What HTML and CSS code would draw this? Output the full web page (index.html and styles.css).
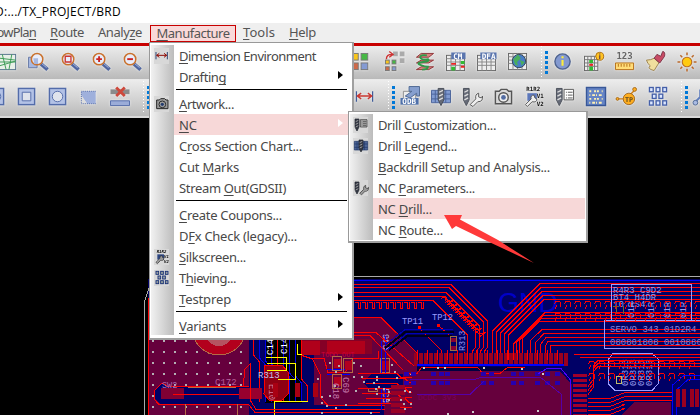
FILE: index.html
```
<!DOCTYPE html>
<html lang="en">
<head>
<meta charset="utf-8">
<title>PCB Editor</title>
<link rel="stylesheet" href="styles.css">
</head>
<body>
<div class="app">
  <header class="titlebar"><span data-w="126">D:.../TX_PROJECT/BRD</span></header>
  <nav class="menubar">
    <span class="first" data-w="48">FlowPla<u>n</u></span>
    <span data-w="34"><u>R</u>oute</span>
    <span data-w="44">Analy<u>z</u>e</span>
    <span class="open"><span data-w="73"><u>M</u>anufacture</span></span>
    <span class="tools" data-w="32"><u>T</u>ools</span>
    <span data-w="27"><u>H</u>elp</span>
  </nav>
  <div class="toolbar row1" id="row1"></div>
  <div class="toolbar row2" id="row2"></div>
  <main class="workspace">
    <svg class="board" id="board" width="700" height="297" viewBox="0 118 700 297" shape-rendering="crispEdges"></svg>
  </main>
</div>

<div class="menu main-menu">
  <div class="item"><i data-icon="dim"></i><span data-w="137"><u>D</u>imension Environment</span></div>
  <div class="item"><i></i><span data-w="47">Draftin<u>g</u></span><b></b></div>
  <hr>
  <div class="item"><i data-icon="camera"></i><span data-w="55"><u>A</u>rtwork...</span></div>
  <div class="item active"><i></i><span data-w="18"><u>N</u>C</span><b></b></div>
  <div class="item"><i></i><span data-w="123">C<u>r</u>oss Section Chart...</span></div>
  <div class="item"><i></i><span data-w="60">Cut <u>M</u>arks</span></div>
  <div class="item"><i></i><span data-w="107">Stream <u>O</u>ut(GDSII)</span></div>
  <hr>
  <div class="item"><i></i><span data-w="103"><u>C</u>reate Coupons...</span></div>
  <div class="item"><i></i><span data-w="118">D<u>F</u>x Check (legacy)...</span></div>
  <div class="item"><i data-icon="silk"></i><span data-w="67"><u>S</u>ilkscreen...</span></div>
  <div class="item"><i data-icon="thief"></i><span data-w="57">T<u>h</u>ieving...</span></div>
  <div class="item"><i></i><span data-w="52"><u>T</u>estprep</span><b></b></div>
  <hr>
  <div class="item"><i></i><span data-w="47"><u>V</u>ariants</span><b></b></div>
</div>

<div class="menu sub-menu">
  <div class="item"><i data-icon="drillList"></i><span data-w="118">Drill <u>C</u>ustomization...</span></div>
  <div class="item"><i data-icon="drillGrid"></i><span data-w="79">Drill <u>L</u>egend...</span></div>
  <div class="item"><i></i><span data-w="172"><u>B</u>ackdrill Setup and Analysis...</span></div>
  <div class="item"><i data-icon="drillWrench"></i><span data-w="97">NC <u>P</u>arameters...</span></div>
  <div class="item active"><i></i><span data-w="54">NC <u>D</u>rill...</span></div>
  <div class="item"><i></i><span data-w="65">NC <u>R</u>oute...</span></div>
</div>
<svg class="pointer" width="92" height="50" viewBox="0 0 92 50"><path d="M0 0L18 0L16 4.5L54 25L90 48L43 26L12 11L8 14Z" fill="#ff3a3a"/></svg>
<script src="app.js"></script>
</body>
</html>
```

FILE: styles.css
```
* { box-sizing: border-box; }
body { margin: 0; width: 700px; height: 415px; overflow: hidden; background: #000; color: #484848; font-family: "Noto Sans", "Open Sans", sans-serif; font-size: 13px; }
u { text-decoration: underline; text-decoration-thickness: 1px; text-underline-offset: 2px; text-decoration-skip-ink: none; }
.app { display: flex; flex-direction: column; width: 700px; height: 415px; overflow: hidden; }
[data-w] { white-space: nowrap; flex: none; }
.titlebar { flex: none; display: flex; align-items: center; height: 23px; background: #fff; color: #000; font-family: "Open Sans", sans-serif; font-size: 12px; }
.titlebar span { margin-left: -5px; }
.menubar { flex: none; display: flex; align-items: center; gap: 14px; height: 23px; padding-bottom: 3px; background: #efefef; border-bottom: 3px solid #c80000; color: #555; }
.first { margin-left: -12px; }
.open { display: flex; align-items: center; justify-content: center; width: 86px; height: 17px; margin-left: -6px; margin-top: 3px; border: 1px solid #c80000; background: #f9d9d9; }
.tools { margin-left: -7px; }
.toolbar { flex: none; display: flex; align-items: center; overflow: hidden; background: linear-gradient(#ececec, #d2d2d2 55%, #b9b9b9); border-bottom: 1px solid #e9e9e9; }
.row1 { height: 34px; padding-bottom: 1px; }
.row2 { height: 38px; padding-bottom: 2px; border-bottom: 2px solid #d9d9d9; }
.row1 .cell:first-child { margin-left: -7.5px; }
.row2 .cell:first-child { margin-left: -19.5px; }
.cell { flex: none; width: 31px; height: 24px; display: flex; align-items: center; justify-content: center; }
.cell svg { overflow: visible; filter: drop-shadow(0 0 1px #f2f2f2); }
.gap { flex: none; width: 200px; }
.handle { flex: none; display: flex; gap: 3px; width: 14px; height: 34px; padding-left: 7px; align-items: center; }
.handle::before { content: ""; width: 1px; height: 33px; background: repeating-linear-gradient(#fff 0 1px, transparent 1px 3px); }
.handle::after { content: ""; width: 3px; height: 23px; background: repeating-linear-gradient(#0078d7 0 3px, transparent 3px 5px); }
.workspace { flex: none; height: 297px; background: #000; }
.board { display: block; }
.board text { font-family: "Liberation Mono", monospace; }
.menu { position: absolute; background: #fff; border: 1px solid #999; border-right: 2px solid #a0a0a0; border-bottom: 2px solid #a0a0a0; }
.main-menu { left: 149px; top: 42px; width: 205px; height: 298px; padding: 2px 2px 2px 1px; background: linear-gradient(90deg, #f1f1f1, #bcbcbc) 1px 2px / 23px 290px no-repeat #fff; }
.sub-menu { left: 348px; top: 111px; width: 240px; height: 132px; padding: 2px 1px 1px 1px; background: linear-gradient(90deg, #f1f1f1, #bcbcbc) 1px 2px / 23px 126px no-repeat #fff; }
.item { display: flex; align-items: center; height: 21px; }
.item i { flex: none; display: flex; justify-content: center; align-items: center; width: 15px; height: 16px; margin: 0 5px 0 3px; }
.item i[data-icon] { background: #d8d8d8; }
.item i svg { width: 14px; height: 14px; overflow: visible; filter: contrast(1.5) brightness(.6); }
.item span { padding-left: 5px; }
.item b { margin: -3px 7px 0 auto; border: 4px solid transparent; border-left: 5px solid #000; border-right: 0; }
.active { background: linear-gradient(#f7d8d8, #f7d8d8) 23px 0 no-repeat; }
.active b { border-left-color: #fff; }
.menu hr { height: 1px; margin: 2px 3px 3px 25px; border: 0; background: #000; }
.pointer { position: absolute; left: 444px; top: 215px; }
```

FILE: app.js
```
const drill = x => `<path d="M${x} 1h6v12l-3 6l-3-6z" fill="#666b78" stroke="#484d57"/><path d="M${x+1} 5l4-2M${x+1} 9l4-2M${x+1} 13l4-2" stroke="#ddd" stroke-width="1.4"/>`;
const wrench = '<path d="M8 18l6-6q-1-5 3-6l0 4 3 1 1-2q1 6-5 6l-5 5z" fill="#eee" stroke="#555"/>';
const lens = inner => `<path d="M12 12l7 6" stroke="#4e65a0" stroke-width="4"/><path d="M12 11l6 5" stroke="#aab9e0"/><circle cx="8" cy="7" r="6" fill="#e8edfa" stroke="#c9722e" stroke-width="1.6"/>${inner}`;
const gridLines = (x, y, w, h, c) => `<rect x="${x}" y="${y}" width="${w}" height="${h}" fill="#eee" stroke="#666"/><path d="M${x} ${y+3.5}h${w}M${x} ${y+7}h${w}M${x} ${y+10.5}h${w}M${x+w/4} ${y}v${h}M${x+w/2} ${y}v${h}M${x+w*.75} ${y}v${h}" stroke="${c}"/>`;
const square = (x, y, c, s = 7) => `<rect x="${x}" y="${y}" width="${s}" height="${s}" fill="${c}" stroke="#777"/>`;
const box = '<rect x="1" y="1" width="17" height="17" fill="#b3c2e6" stroke="#536caa" stroke-width="1.5"/>';
const label = (x, y, s, t, c = '#fff') => `<text x="${x}" y="${y}" font-family="DejaVu Sans Mono" font-weight="bold" font-size="${s}" fill="${c}">${t}</text>`;
const icons = {
  map: '<rect x="1" y="2" width="17" height="16" fill="#e8f0e8" stroke="#56738d"/><path d="M1 6l17 2M1 14l17-5M4 2l4 16M11 18l3-16M1 10h17" stroke="#3b9b54" fill="none"/>',
  zoomBox: '<path d="M-1 5h9v11H-1z" fill="#a7b8e1" stroke="#6679a6"/>' + lens('<path d="M4 6h5v6H5z" fill="#a7b8e1"/>'),
  zoomFit: lens('<path d="M5 4h6v6H5z" fill="none" stroke="#c33" stroke-width="1.4"/>'),
  zoomIn: lens('<path d="M5 7h6M8 4v6" stroke="#c22" stroke-width="2"/>'),
  zoomOut: lens('<path d="M5 7h6" stroke="#c22" stroke-width="2"/>'),
  colors: square(-2, 1, '#f9c51c') + square(8, 1, '#46b844') + square(-2, 11, '#cf6948') + square(8, 11, '#859bd3'),
  swap: '<path d="M9 -1h5v5H9zM16 -1h5v5h-5zM16 6h5v5h-5z" fill="#aaa"/><path d="M2 7q0-5 6-5M5 -1l4 3l-4 3" stroke="#c33" fill="none" stroke-width="1.5"/>' + square(1, 8, '#f9c51c', 4) + square(8, 8, '#46b844', 4) + square(1, 15, '#cf6948', 4) + square(8, 15, '#859bd3', 4),
  layers: '<path d="M6 1h13l-5 4H1zM6 8h13l-5 3H1zM6 15h13l-5 3H1z" fill="#d98580" stroke="#8e3337"/><path d="M12 3q-7-1-7 2t8 2q3 2-5 3t-3 3t8 2q0 3-6 3" fill="none" stroke="#2f9a4a" stroke-width="2"/>',
  cm: gridLines(0, 3, 19, 16, '#888') + '<path d="M5 11h5v2H5zM15 14h4v2h-4z" fill="#e22"/><path d="M5 15h4v4H5zM15 9h4v3h-4z" fill="#3b3"/><path d="M5 0h15v7H5z" fill="#5a75ae"/>' + label(7, 6.5, 8, 'CM'),
  dfa: gridLines(0, 3, 19, 16, '#888') + '<path d="M3 0h17v7H3z" fill="#5a75ae"/>' + label(4.5, 6.5, 8, 'DFA'),
  globe: gridLines(0, 1, 19, 17, '#888') + '<circle cx="11" cy="9" r="7" fill="#487dc5" stroke="#345"/><path d="M5 7l5-5l3 4l-4 4l1 4l-3-1zM12 8l5 2l-3 4z" fill="#4aae5d"/>',
  info: '<circle cx="9.5" cy="9.5" r="8" fill="#8399d0" stroke="#4e638f" stroke-width="1.5"/><path d="M9.5 8v6M9.5 4v2" stroke="#ffee39" stroke-width="2.2" fill="none"/>',
  gridInfo: gridLines(0, 4, 14, 15, '#777') + '<path d="M5 8h4v3H5zM5 15h4v4H5z" fill="#3b3"/><path d="M5 12h4v2H5z" fill="#e22"/><circle cx="16" cy="4" r="4.2" fill="#ffc323" stroke="#a96d16"/><path d="M16 1v1M16 3v4" stroke="#754" stroke-width="1.5"/>',
  ruler: label(1, 7, 9.5, '123', '#666') + '<path d="M0 11h19v7H0z" fill="#ffdc78" stroke="#b56d14"/><path d="M3 12v3M6 12v3M9 12v3M12 12v3M15 12v3" stroke="#b56d14"/>',
  brush: '<path d="M0 8q5 0 8-2l5 5l-5 8q-8-2-4-5q-3-2-4-6z" fill="#f0df9e" stroke="#9b814d"/><path d="M8 6l3-4l4 2l2-5q3 0 2 5l-5 7z" fill="#c84b65" stroke="#7a3548"/>',
  sun: '<circle cx="10" cy="10" r="5" fill="#ffca10" stroke="#bd701e" stroke-width="1.2"/><path d="M10 0v3M10 17v3M0 10h3M17 10h3M3 3l2 2M15 15l2 2M3 17l2-2M15 5l2-2" stroke="#ba682a" stroke-width="1.6"/>',
  square: box + '<path d="M5 5h9v9H5z" fill="#dfe3ec" stroke="#536caa"/>',
  circle: box + '<circle cx="9.5" cy="9.5" r="5.5" fill="#dfe3ec" stroke="#536caa"/>',
  cut: '<path d="M17 4v13H8L2 9V4z" fill="#9fb0dc"/><path d="M2 6v11h6L2 8" fill="#ddd"/><path d="M17 4H2v13h15" fill="none" stroke="#536caa" stroke-dasharray="1 1"/>',
  remove: '<path d="M0 2h20v5H0z" fill="#8b8b8b"/><path d="M6 0l9 9M15 0L6 9" stroke="#cd493c" stroke-width="3"/><path d="M0 14h20v5H0z" fill="#9bacd8" stroke="#536caa"/>',
  dim: '<path d="M1 4v11M18 4v11" stroke="#405d9a" stroke-width="1.3"/><path d="M2 9h15M6 6L2 9l4 3M13 6l4 3l-4 3" fill="none" stroke="#c93832" stroke-width="1.5"/>',
  odb: '<path d="M3 4h13v12H3z" fill="#eee" stroke="#888"/><path d="M5 9l7-5h-3V-1h11v10h-3V6l-7 5z" fill="#869fce" stroke="#506994"/><path d="M0 11h19v7H0z" fill="#4e70aa"/>' + label(2, 17.5, 8, 'ODB'),
  drillGrid: '<path d="M0 3h20v13H0z" fill="#819bd1" stroke="#4a639a"/><path d="M4 3v13M15 3v13M0 7h20M0 12h20" stroke="#4a639a"/>' + drill(7),
  drillWrench: drill(1) + wrench,
  camera: '<path d="M2 4h4l2-2h6l2 2h3v13H2z" fill="#d8d8d8" stroke="#555" stroke-width="1.5"/><circle cx="10.5" cy="10.5" r="5" fill="#eee" stroke="#555" stroke-width="1.5"/><circle cx="10.5" cy="10.5" r="2.5" fill="#526ca2"/>',
  silk: label(2, 4, 6, 'R1R2', '#111') + '<path d="M3 6h10v8H3z" fill="#5d78bb"/>' + label(13, 11, 6, 'V1', '#111') + label(13, 19, 6, 'V2', '#111') + '<path d="M1 18l6-6q-1-4 3-4l1 3l2 1q0 4-5 3l-5 5z" fill="#eee" stroke="#555"/>',
  drillList: drill(1) + '<path d="M9 2h10v11H9z" fill="#fff" stroke="#555"/><path d="M11 5h1M13 5h5M11 8h1M13 8h5M11 11h1M13 11h5" stroke="#555"/>',
  dotGrid: '<path d="M0 0h20v19H0z" fill="#6685c6" stroke="#385797" stroke-width="1.5"/><path d="M3 4h14M3 12h14" stroke="#fff1b2" stroke-width="2" stroke-dasharray="2 3 2 1"/><path d="M3 8h14M3 16h14" stroke="#fff1b2" stroke-width="2" stroke-dasharray="1 2 3 1"/>',
  tp: '<path d="M-1 12h8M13 8l5-5" stroke="#cf7e16" stroke-width="1.5"/><circle cx="0" cy="12" r="1.5" fill="#ffae1f" stroke="#a16820"/><circle cx="18" cy="2" r="2" fill="#ffae1f" stroke="#a16820"/><circle cx="12" cy="12" r="6" fill="#ffae1f" stroke="#a16820"/>' + label(8, 15, 7, 'TP', '#542'),
  thief: [[1,0],[8,0],[15,0],[4,7],[11,7],[1,14],[8,14],[15,14]].map(([x, y]) => `<rect x="${x}" y="${y}" width="4" height="4.5" fill="#dce7ff" stroke="#445fa8" stroke-width="1.4"/>`).join(''),
  route: '<path d="M1 16l6-6V3h7" fill="none" stroke="#627fbc" stroke-width="2"/><circle cx="2" cy="16" r="2.5" fill="#a9bbe4" stroke="#506994"/>'
};
const glyph = n => `<svg width="20" height="20" viewBox="-.5 -.5 21 21" fill="none">${icons[n]}</svg>`;
const bar = names => names.split(' ').map(n => n === '|' ? '<div class="handle"></div>' : n === '_' ? '<div class="gap"></div>' : `<div class="cell">${glyph(n)}</div>`).join('');
row1.innerHTML = bar('map zoomBox zoomFit zoomIn zoomOut _ colors swap layers cm dfa globe | info gridInfo ruler brush sun');
row2.innerHTML = bar('circle square circle cut remove | _ dim | odb drillGrid drillWrench camera silk drillList dotGrid tp thief | route');
document.querySelectorAll('[data-icon]').forEach(e => { e.innerHTML = glyph(e.dataset.icon); });

// Spread each label to its design width
document.querySelectorAll('[data-w]').forEach(e => {
  const r = document.createRange();
  r.selectNodeContents(e);
  e.style.letterSpacing = (e.dataset.w - r.getBoundingClientRect().width) / e.textContent.length + 'px';
});

// Board artwork
let art = '';
const line = (d, c = '#ff0000', w = 1) => { art += `<path d="${d}" fill="none" stroke="${c}" stroke-width="${w}"/>`; };
const area = (d, c) => { art += `<path d="${d}" fill="${c}"/>`; };
const rect = (x, y, w, h, c) => { art += `<rect x="${x}" y="${y}" width="${w}" height="${h}" fill="${c}"/>`; };
const text = (x, y, s, t, c = '#8e91f0', rot = 0) => { art += `<text x="${x}" y="${y}" font-size="${s}" fill="${c}" transform="rotate(${rot} ${x} ${y})">${t}</text>`; };
let seed = 7;
const rnd = n => { seed = (seed * 1103515245 + 12345) % 2147483648; return Math.floor(seed / 2147483648 * n); };

rect(148, 279, 552, 136, '#000066');
line('M144.5 415V302L149 288L153 276.5H700', '#a9a9a9');
line('M150 280.5H700', '#0000ff');
area('M148 300H249V415H148z', '#66003d');
area('M354 317H381L417 353V415H312V340H354z', '#66003d');
area('M417 371H560L572 385V415H400V371z', '#66003d');
line('M148.5 298V415', '#ff0000');
for (let y = 340; y < 415; y += 11) for (let x = 152; x < 248; x += 11) rect(x, y, 2, 2, '#b5b0b5');
art += '<circle cx="219" cy="328" r="27" fill="#b3001d" stroke="#b46c45"/><circle cx="219" cy="332" r="14" fill="#b55361"/>';
area('M154 391L162 383L168 386H249V404H160L154 398z', '#000066');
line('M249 404.5H159L154 399V391L162 383L168 386.5H249');
rect(161, 388, 23, 11, '#800033'); rect(239, 388, 10, 11, '#800033');
line('M173 394.5H240'); line('M188 387.5H236', '#b46c45'); line('M185.5 404V415M237.5 404V415', '#b46c45');
text(162, 388, 8.5, 'SW2', '#a86eb2'); text(215, 385, 9, 'C172', '#b85d9b');

rect(265, 339, 37, 64, '#000'); rect(302, 339, 70, 15, '#850026');
rect(302, 354, 12, 61, '#000066'); rect(249, 405, 135, 10, '#000066');
for (let i = 0; i < 9; i++) line(`M${253+i*6}.5 338V${355+i*3}L${259+i*6}.5 ${362+i*3}V402`, i % 4 ? '#0000ee' : '#ff0000');
area('M265 365H282L288 372V394L282 400H269L264 394z', '#8e0013');
line('M265 365H282L288 372V394L282 400H269L264 394z');
line('M266 357.5H286V370H267M267 363.5H295V379H278', '#ffff00'); line('M274.5 415V401.5H308', '#ffff00');
line('M297.5 344V354.5H302', '#ffff00');
text(273, 355, 9, 'C14', '#fff', -90); text(287, 354, 9, 'C14', '#fff', -90);
text(258, 378, 9, 'R313', '#c5c2ed'); text(269, 384, 9, 'E10', '#d47a98', 90);
for (const x of [273, 295, 313]) rect(x, 383, 5, 14, '#a90013');
rect(239, 388, 23, 11, '#98002e'); rect(302, 341, 18, 14, '#b0001b'); rect(327, 341, 38, 13, '#b0001b');
line('M230 386.5H243L245 369L250 364V400L256 409.5H385M249 405L255 412.5H380');
line('M302 355.5L311 358.5H324L328 372.5H345L353 358.5H378V351M312 358L320 374V397L328 405.5H385');
line('M327 369.5H353M327 374.5H350', '#0000ff'); text(321, 357, 7, 'TODO OUT', '#cb003e');
for (const [x, y] of [[334,359],[345,361],[334,377],[370,380],[382,361]]) { rect(x, y, 7, 9, '#b10020'); line(`M${x-1.5} ${y-2.5}h9v14h-9z`, '#b46c45'); }
text(333, 383, 9, 'C18', '#c77bad', 90); text(343, 377, 9, 'C69', '#c77bad', 90);
text(389, 350, 9, 'C46', '#b7b0e7', -90); text(389, 403, 9, 'R31', '#b7b0e7', -90);
line('M381.5 341V410M385.5 336V404', '#0000ff');
line('M354 317.5H381L417 353V366M354 332.5H376L414 366M354 335.5H370L403 370');
area('M363 382L372 374H403V389H369z', '#000066');
for (let i = 0; i < 7; i++) line(`M${358+i%3*4} ${373+i*5}.5H${397+i%2*8}L${401+i%2*8} ${377+i*5}.5H412`);
for (let y = 385; y < 412; y += 6) rect(391, y, 14, 4, '#990026');
for (let i = 0; i < 38; i++) rect(314 + rnd(104), 361 + rnd(52), 2, 2, '#b5b0b5');

// Upper trace fan
for (const [y, x, end] of [[284.5,451,487], [287.5,449,483], [292.5,446,479], [296.5,444,475], [300.5,433,467]]) line(`M354 ${y}H${x}L${end} ${y+end-x}V${y > 300 ? 360 : 348}L${end-3} 352V360`);
let comb = '';
for (let x = 355; x < 425; x += 7) comb += `M${x} 302.5h3v6M${x+5}.5 302v6h-3`;
line(comb);
let curls = '';
for (let i = 0; i < 9; i++) curls += `M${441+i*4} ${299+i*4}q6-5 5 0t5 2t-4 4`;
line(curls);
line('M419 328L441 350V358M438 325L451 337'); rect(418, 326, 3, 3, '#ff0000'); rect(437, 324, 3, 3, '#ff0000');
line('M385 348L406 331.5H454M389 350L408 335.5H452', '#00001c', 2);
line('M385 345L405 329.5H453M387 350L407 333.5H453', '#0000bb');
line('M450.5 336.5h6v14h-6z', '#9b7145'); rect(451, 338, 5, 4, '#880033'); rect(451, 346, 5, 4, '#880033'); text(465, 351, 8.5, 'R313', '#9093ef', -90);
text(402, 324, 8.8, 'TP11', '#9b9bff'); text(432, 320, 8.8, 'TP12', '#9b9bff');
art += '<text x="498" y="312" font-size="27" fill="#0000c8" style="font-family:Liberation Sans">GND</text>';
for (let i = 0; i < 5; i++) { const y = 283.5 + i*4, x = 540 + i*1, e = 492 + i*4.2; line(`M700 ${y}H${x}L${e} ${y+x-e}V360`); }
for (let i = 0; i < 6; i++) { const y = 312.5 + i*3, x = 545 - i*2, e = 513 + i*3; if (i < 4) line(`M700 ${y}H${x}L${e} ${y+x-e}V360`); }
for (let i = 0; i < 5; i++) line(`M700 ${329.5+i*4}H${542+i*2}L${530+i*5} ${341+i*2}V363`);
for (let x = 414; x < 567; x += 5) rect(x, 353, 4, 13, '#99001f');
for (let x = 417; x < 566; x += 10) line(`M${x}.5 350V360`);
line('M417 364.5H564', '#0000ff', 2); rect(417, 367, 104, 4, '#000040');
line('M404 373.5H417L422 367H477L483 373.5H500L508 367H525');
for (const x of [404, 411, 431, 439, 445, 481, 489, 511, 519, 535, 545, 555]) for (const y of [372, 381]) rect(x, y, 5, 4, '#2600ae');
line('M410 379.5H475L482 377H540L561 394V415M417 394.5H470L484 381', '#5500a8');
text(418, 400, 8, 'DCDC 3V3', '#7c005b');
for (const [x, y] of [[423,367],[437,367],[444,367],[483,367],[521,368],[542,373],[537,410],[472,411],[447,413],[409,391]]) rect(x, y, 2, 2, '#ccc');

// Right-hand connector block
line('M611.5 320V284.5H691.5V320M700 320.5H604.5V348.5H700', '#9a9cff');
for (let r = 0; r < 3; r++) text(613, 293 + r*7, 9, ['R4R3 C9D2','BT4 H4DR','  10  1S4'][r], '#989be9');
for (const x of [634, 654, 670, 686]) text(x, 318, 9, '01R', '#989be9', -90);
text(610, 332, 9, 'SERVO 343 01D2R4', '#8587df'); text(610, 345, 9, '080801808 0010880', '#8587df');
line('M613 353.5H652L658 359V384L652 390.5H615L608.5 384V359z', '#9a9cff');
for (let x = 628; x < 656; x += 8) text(x, 386, 9, '0R313', '#9c9eee', -90);
line('M613 306.5h6M616.5 306v8M623.5 306v8', '#66663d'); line('M616 376.5h5v7h-5z', '#bfb86c');
for (let r = 0; r < 4; r++) {
  let d = '';
  const y = [302, 314, 362, 374][r];
  for (let x = r > 1 ? 588 : 554; x < 696; x += 10) d += `M${x} ${y+2}q2-4 6-2v5M${x+3} ${y+3}l-2 4`;
  line(d);
}
for (let i = 0; i < 5; i++) line(`M588 ${398+i*4}.5H610L625 ${392+i*4}.5H${i > 2 ? 622 : 672}`);
for (let i = 0; i < 3; i++) line(`M588 ${386+i*4}.5L593 ${380+i*4}V${372-i*3}L598 ${366-i*3}.5H700`);
for (let y = 374; y < 415; y += 5) rect(573, y, 14, 3, '#a1002a');
area('M622 415L634 402H671V415z', '#66003d');
line('M574 354.5H700M580 357.5H700');
line('M672.5 415V385L684 375.5H700M676.5 415V390L688 379.5H700', '#0000ff');
for (const x of [676, 682, 690, 695]) rect(x, 389, 4, 18, '#99001f');
line('M570.5 415V380L561 368.5H547L538 374', '#4d00ff');
board.innerHTML = art;
```
